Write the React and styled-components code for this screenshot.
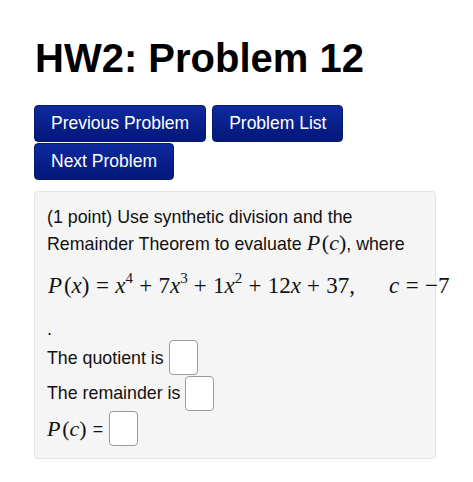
import styled, { createGlobalStyle } from "styled-components";

const GlobalStyle = createGlobalStyle`
  body {
    margin: 0;
    background: #ffffff;
    font-family: "Liberation Sans", Arial, Helvetica, sans-serif;
    color: #111;
  }
`;

const Page = styled.div`
  padding: 0 35px 0 34px;
  width: 473px;
  box-sizing: border-box;
`;

const Title = styled.h1`
  margin: 35px 0 24px 1px;
  font-size: 40px;
  font-weight: bold;
  line-height: 46px;
  color: #000;
`;

const Nav = styled.div`
  display: flex;
  flex-wrap: wrap;
  gap: 1px 6px;
  width: 320px;
`;

const NavButton = styled.button`
  height: 37px;
  padding: 0 16px;
  border: 1px solid #061b6b;
  border-radius: 4px;
  background: linear-gradient(#0d2a9e, #04177a);
  color: #fff;
  font-family: "Liberation Sans", Arial, sans-serif;
  font-size: 17.5px;
  cursor: pointer;
`;

const ProblemBox = styled.div`
  margin-top: 11px;
  width: 402px;
  box-sizing: border-box;
  padding: 12px 12px 11px 12px;
  background: #f5f5f5;
  border: 1px solid #e3e3e3;
  border-radius: 4px;
  font-size: 17.8px;
  line-height: 26px;
`;

const Para = styled.p`
  margin: 0;
`;

const Serif = styled.span`
  font-family: "Liberation Serif", "Times New Roman", serif;
  font-size: 22px;
`;

const Display = styled.div`
  margin: 14px 0 14px 1px;
  white-space: nowrap;
  font-family: "Liberation Serif", "Times New Roman", serif;
  font-size: 23px;
  line-height: 30px;
`;

const V = styled.i`
  font-style: italic;
  margin-right: ${(p) => (p.$ic ? "0.08em" : "0")};
`;

const Op = styled.span`
  margin: 0 ${(p) => (p.$rel ? 0.28 : 0.27)}em;
`;

const Sup = styled.sup`
  font-size: 15px;
  vertical-align: 10px;
  line-height: 0;
`;

const Gap = styled.span`
  display: inline-block;
  width: ${(p) => p.$w}px;
`;

const Dot = styled.div`
  padding-top: 3px;
  line-height: 22px;
`;

const AnswerRow = styled.div`
  display: flex;
  align-items: center;
  height: 35.5px;
  white-space: pre;
`;

const Eq = styled.span`
  margin-left: 6px;
`;

const AnswerBox = styled.input`
  width: 29px;
  height: 35px;
  box-sizing: border-box;
  margin-left: ${(p) => p.$gap || 5}px;
  border: 1.5px solid #9a9a9a;
  border-radius: 4px;
  background: #fff;
  padding: 0;
`;

const PofC = () => (
  <Serif>
    <V $ic>P</V>(<V>c</V>)
  </Serif>
);

const App = () => {
  return (
    <Page>
      <GlobalStyle />
      <Title>HW2: Problem 12</Title>
      <Nav>
        <NavButton>Previous Problem</NavButton>
        <NavButton>Problem List</NavButton>
        <NavButton>Next Problem</NavButton>
      </Nav>
      <ProblemBox>
        <Para>
          (1 point) Use synthetic division and the Remainder Theorem to evaluate <PofC />, where
        </Para>
        <Display>
          <V $ic>P</V>(<V>x</V>)<Op $rel>=</Op>
          <V>x</V>
          <Sup>4</Sup>
          <Op>+</Op>7<V>x</V>
          <Sup>3</Sup>
          <Op>+</Op>1<V>x</V>
          <Sup>2</Sup>
          <Op>+</Op>12<V>x</V>
          <Op>+</Op>37,
          <Gap $w={34} />
          <V>c</V>
          <Op $rel>=</Op>−7
        </Display>
        <Dot>.</Dot>
        <AnswerRow>
          The quotient is
          <AnswerBox type="text" />
        </AnswerRow>
        <AnswerRow>
          The remainder is
          <AnswerBox type="text" />
        </AnswerRow>
        <AnswerRow>
          <PofC />
          <Eq>=</Eq>
          <AnswerBox type="text" $gap={6} />
        </AnswerRow>
      </ProblemBox>
    </Page>
  );
};

export default App;
